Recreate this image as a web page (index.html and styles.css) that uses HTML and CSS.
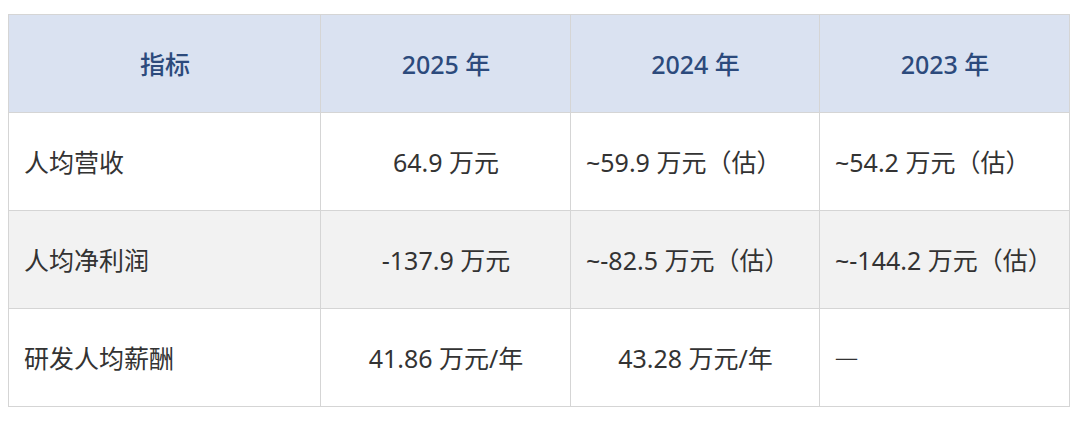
FILE: index.html
```html
<!DOCTYPE html>
<html lang="zh-CN">
<head>
<meta charset="utf-8">
<link rel="stylesheet" href="styles.css">
</head>
<body>
<table class="data">
  <colgroup>
    <col class="c1"><col class="c2"><col class="c3"><col class="c4">
  </colgroup>
  <thead>
    <tr><th>指标</th><th>2025 年</th><th>2024 年</th><th>2023 年</th></tr>
  </thead>
  <tbody>
    <tr>
      <td class="left">人均营收</td>
      <td class="center">64.9 万元</td>
      <td class="left">~59.9 万元（估）</td>
      <td class="left">~54.2 万元（估）</td>
    </tr>
    <tr class="alt">
      <td class="left">人均净利润</td>
      <td class="center">-137.9 万元</td>
      <td class="left">~-82.5 万元（估）</td>
      <td class="left">~-144.2 万元（估）</td>
    </tr>
    <tr>
      <td class="left">研发人均薪酬</td>
      <td class="center">41.86 万元/年</td>
      <td class="center">43.28 万元/年</td>
      <td class="left"><span class="dash">—</span></td>
    </tr>
  </tbody>
</table>
</body>
</html>
```
FILE: styles.css
```css
html, body {
  margin: 0;
  padding: 0;
  background: #ffffff;
}
body {
  padding: 14px 11px 0 8px;
  font-family: "Noto Sans", "Noto Sans CJK SC", sans-serif;
}
.data {
  border-collapse: collapse;
  width: 1061px;
  table-layout: fixed;
}
.c1 { width: 312px; }
.c2 { width: 250px; }
.c3 { width: 249px; }
.c4 { width: 250px; }
.data th, .data td {
  border: 1px solid #d5d5d5;
  height: 98px;
  padding: 0 14px 0 15px;
  font-size: 25px;
  line-height: 32px;
  box-sizing: border-box;
  white-space: nowrap;
  text-spacing-trim: space-all;
}
.data th {
  background: #dae2f1;
  color: #2c4a7c;
  font-weight: 500;
  text-align: center;
}
.data td {
  color: #333333;
  font-weight: 400;
}
.data tr.alt td {
  background: #f2f2f2;
}
.left { text-align: left; }
.center { text-align: center; }
.dash {
  display: inline-block;
  margin-left: -1px;
  padding-top: 2px;
  font-family: "Noto Sans CJK SC", sans-serif;
  font-feature-settings: "fwid" 1;
  font-weight: 700;
}
```
